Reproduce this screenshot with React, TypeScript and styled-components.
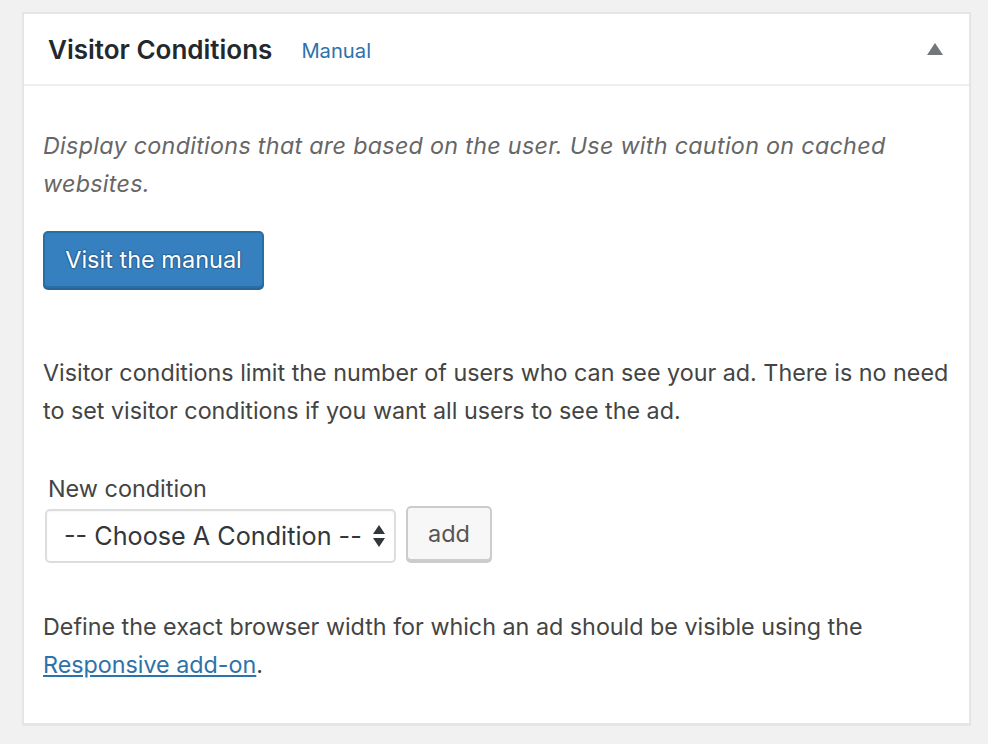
import React from 'react'
import styled, { createGlobalStyle } from 'styled-components'

const GlobalStyle = createGlobalStyle`
  html, body {
    margin: 0;
    padding: 0;
    background: #f1f1f1;
  }
  body {
    font-family: Inter, "Noto Sans", "Liberation Sans", sans-serif;
    color: #444;
  }
`

const Page = styled.div`
  padding: 12px 17px 20px 22px;
`

const Postbox = styled.div`
  background: #fff;
  border: 2px solid #e5e5e5;
  box-shadow: 0 1px 1px rgba(0, 0, 0, 0.04);
`

const Header = styled.div`
  display: flex;
  align-items: center;
  height: 70px;
  padding: 0 26px 0 24px;
  border-bottom: 2px solid #eee;
`

const Title = styled.h2`
  margin: 0;
  font-size: 26px;
  font-weight: 600;
  color: #23282d;
`

const HeaderLink = styled.a`
  margin-left: 29px;
  margin-top: 2px;
  font-size: 20.2px;
  color: #2e72aa;
  text-decoration: none;
`

const Toggle = styled.span`
  margin-left: auto;
  width: 0;
  height: 0;
  border-left: 8px solid transparent;
  border-right: 8px solid transparent;
  border-bottom: 12px solid #72777c;
`

const Body = styled.div`
  padding: 41px 10px 39px 19px;
`

const Text = styled.p<{ $italic?: boolean; $gap?: number }>`
  margin: 0;
  margin-top: ${p => p.$gap ?? 0}px;
  font-size: 23.3px;
  line-height: 38px;
  font-style: ${p => (p.$italic ? 'italic' : 'normal')};
  letter-spacing: ${p => (p.$italic ? '0.3px' : '0')};
  color: ${p => (p.$italic ? '#666' : '#444')};
`

const PrimaryButton = styled.a`
  display: inline-flex;
  align-items: center;
  justify-content: center;
  box-sizing: border-box;
  margin-top: 28px;
  width: 221px;
  height: 57px;
  background: #3680bf;
  border: 2px solid #2a6ea6;
  border-radius: 5px;
  box-shadow: 0 2px 0 #2a6496;
  color: #fff;
  font-size: 23.5px;
  text-decoration: none;
  text-shadow: 0 -1px 1px #2a6496, 1px 0 1px #2a6496, 0 1px 1px #2a6496, -1px 0 1px #2a6496;
`

const Field = styled.div`
  margin-top: 43px;
  padding-left: 2px;
`

const Label = styled.div`
  padding-left: 3px;
  font-size: 23.4px;
  line-height: 32px;
  color: #444;
`

const Row = styled.div`
  display: flex;
  align-items: flex-start;
  gap: 10px;
  margin-top: 1px;
`

const Select = styled.div`
  position: relative;
  box-sizing: border-box;
  display: flex;
  align-items: center;
  width: 351px;
  height: 54px;
  margin-top: 3px;
  padding-left: 17px;
  border: 2px solid #ddd;
  border-radius: 5px;
  box-shadow: inset 0 1px 2px rgba(0, 0, 0, 0.04);
  font-size: 25.2px;
  color: #32373c;
  white-space: nowrap;
`

const Arrows = styled.svg`
  position: absolute;
  right: 9px;
  top: 50%;
  transform: translateY(-50%);
`

const SecondaryButton = styled.button`
  box-sizing: border-box;
  width: 86px;
  height: 55px;
  background: #f7f7f7;
  border: 2px solid #ccc;
  border-radius: 5px;
  box-shadow: 0 2px 0 #ccc;
  font-family: inherit;
  font-size: 23.5px;
  color: #555;
  padding: 0;
`

const Link = styled.a`
  color: #2e72aa;
  text-decoration: underline;
  text-underline-offset: 2px;
`

export default function App() {
  return (
    <>
      <GlobalStyle />
      <Page>
        <Postbox>
          <Header>
            <Title>Visitor Conditions</Title>
            <HeaderLink href="#">Manual</HeaderLink>
            <Toggle />
          </Header>
          <Body>
            <Text $italic>
              Display conditions that are based on the user. Use with caution on cached websites.
            </Text>
            <PrimaryButton href="#">Visit the manual</PrimaryButton>
            <Text $gap={66}>
              Visitor conditions limit the number of users who can see your ad. There is no need to set
              visitor conditions if you want all users to see the ad.
            </Text>
            <Field>
              <Label>New condition</Label>
              <Row>
                <Select>
                  -- Choose A Condition --
                  <Arrows width="12" height="24" viewBox="0 0 12 24">
                    <path d="M6 1 L12 10 H0 Z" fill="#32373c" />
                    <path d="M6 23 L12 14 H0 Z" fill="#32373c" />
                  </Arrows>
                </Select>
                <SecondaryButton>add</SecondaryButton>
              </Row>
            </Field>
            <Text $gap={45}>
              Define the exact browser width for which an ad should be visible using the{' '}
              <Link href="#">Responsive add-on</Link>.
            </Text>
          </Body>
        </Postbox>
      </Page>
    </>
  )
}
